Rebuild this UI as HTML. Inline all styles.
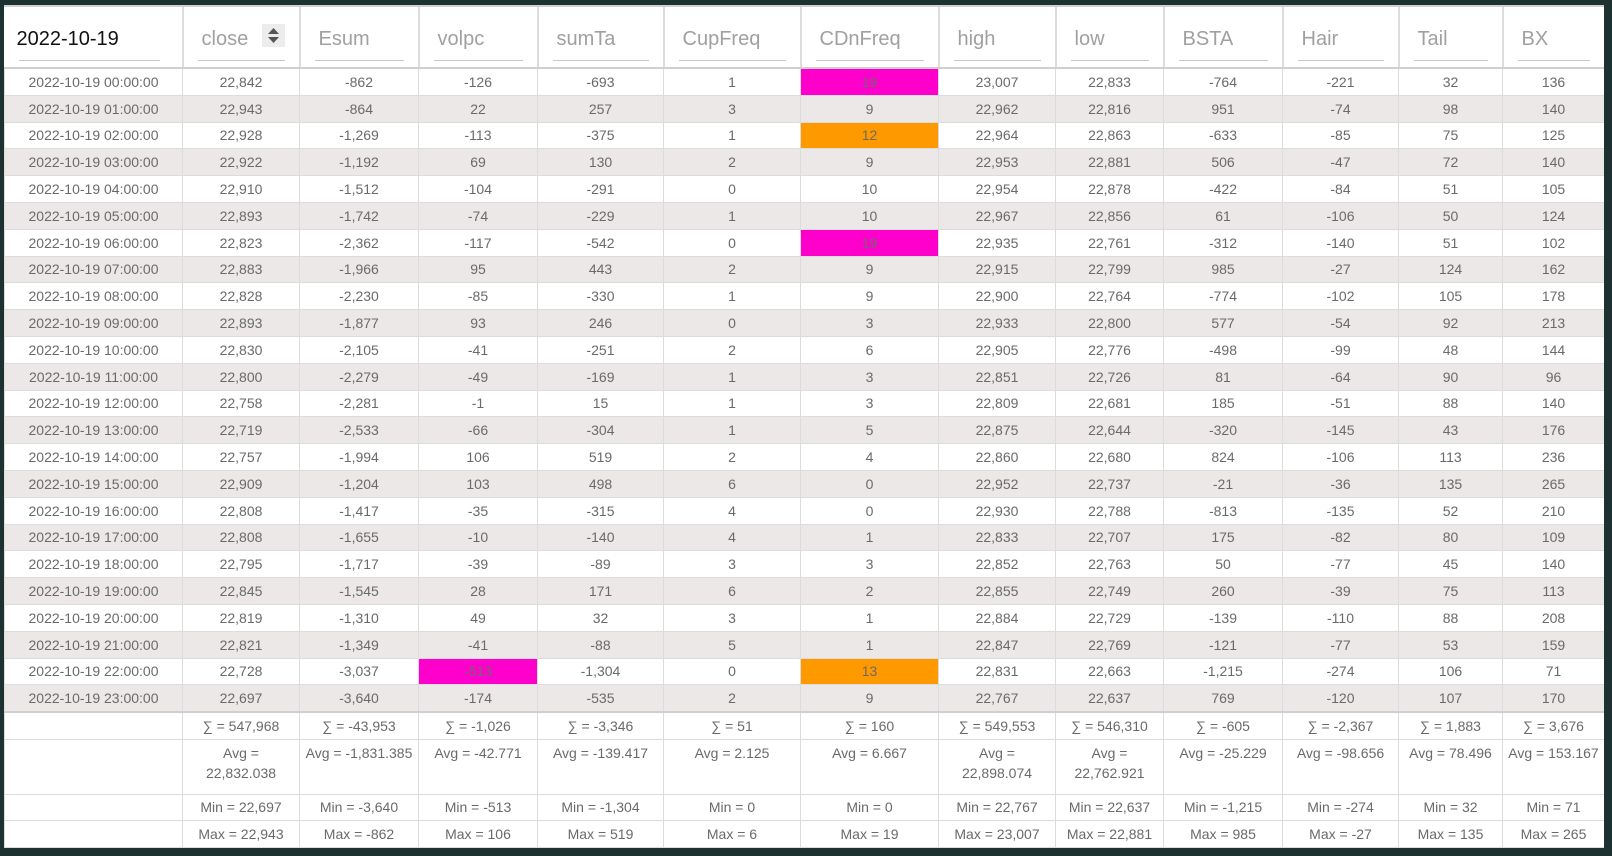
<!DOCTYPE html>
<html><head><meta charset="utf-8"><style>
html,body{margin:0;padding:0;background:#1d3131;width:1612px;height:856px;overflow:hidden}
#w{position:absolute;left:4px;top:5px;width:1600px;height:843px;background:#fff;border-top:2px solid #d0d0d0;box-sizing:border-box;overflow:hidden}
table{border-collapse:collapse;table-layout:fixed;width:1600px;font-family:"Liberation Sans",sans-serif;font-size:14px;color:#6a6a6a}
td,th{border:1px solid #dcdcdc;text-align:center;padding:0;overflow:hidden;white-space:nowrap}
th{height:60px;font-weight:normal;font-size:20px;color:#a0a0a0;text-align:left;position:relative;vertical-align:middle;border-top:none;border-bottom:2px solid #cfcfcf;border-left:2px solid #dcdcdc}
th span{position:absolute;left:18px;top:21px}
th i{position:absolute;left:14px;right:14px;bottom:6px;border-bottom:1px solid #c8c8c8}
th.d span{color:#111;left:12px}
th.d i{left:14px;right:22px}
tbody td{height:25.8px}
tbody tr:nth-child(even) td{background:#ebe8e7}
.m{background:#ff00cc!important}.o{background:#ff9900!important}
tfoot td{height:25.5px;padding:0;line-height:18px;vertical-align:middle}
tfoot tr.a td{height:51px;vertical-align:top;padding-top:3px;line-height:20px}
tfoot tr:first-child td{border-top:2px solid #cfcfcf}
.s{position:absolute;left:78px;top:17px;width:23px;height:23px;background:#ececec}
</style></head><body><div id="w"><table>
<colgroup><col style="width:178px"><col style="width:117px"><col style="width:119px"><col style="width:119px"><col style="width:126px"><col style="width:137px"><col style="width:138px"><col style="width:117px"><col style="width:108px"><col style="width:119px"><col style="width:116px"><col style="width:104px"><col style="width:102px"></colgroup>
<thead><tr><th class="d" style="border-left:none"><span>2022-10-19</span><i></i></th><th><span>close</span><div class="s"><svg width="23" height="23"><path d="M6 10L11.5 4L17 10Z M6 13L11.5 19L17 13Z" fill="#555"/></svg></div><i></i></th><th><span>Esum</span><i></i></th><th><span>volpc</span><i></i></th><th><span>sumTa</span><i></i></th><th><span>CupFreq</span><i></i></th><th><span>CDnFreq</span><i></i></th><th><span>high</span><i></i></th><th><span>low</span><i></i></th><th><span>BSTA</span><i></i></th><th><span>Hair</span><i></i></th><th><span>Tail</span><i></i></th><th><span>BX</span><i></i></th></tr></thead>
<tbody>
<tr><td>2022-10-19 00:00:00</td><td>22,842</td><td>-862</td><td>-126</td><td>-693</td><td>1</td><td class="m">19</td><td>23,007</td><td>22,833</td><td>-764</td><td>-221</td><td>32</td><td>136</td></tr>
<tr><td>2022-10-19 01:00:00</td><td>22,943</td><td>-864</td><td>22</td><td>257</td><td>3</td><td>9</td><td>22,962</td><td>22,816</td><td>951</td><td>-74</td><td>98</td><td>140</td></tr>
<tr><td>2022-10-19 02:00:00</td><td>22,928</td><td>-1,269</td><td>-113</td><td>-375</td><td>1</td><td class="o">12</td><td>22,964</td><td>22,863</td><td>-633</td><td>-85</td><td>75</td><td>125</td></tr>
<tr><td>2022-10-19 03:00:00</td><td>22,922</td><td>-1,192</td><td>69</td><td>130</td><td>2</td><td>9</td><td>22,953</td><td>22,881</td><td>506</td><td>-47</td><td>72</td><td>140</td></tr>
<tr><td>2022-10-19 04:00:00</td><td>22,910</td><td>-1,512</td><td>-104</td><td>-291</td><td>0</td><td>10</td><td>22,954</td><td>22,878</td><td>-422</td><td>-84</td><td>51</td><td>105</td></tr>
<tr><td>2022-10-19 05:00:00</td><td>22,893</td><td>-1,742</td><td>-74</td><td>-229</td><td>1</td><td>10</td><td>22,967</td><td>22,856</td><td>61</td><td>-106</td><td>50</td><td>124</td></tr>
<tr><td>2022-10-19 06:00:00</td><td>22,823</td><td>-2,362</td><td>-117</td><td>-542</td><td>0</td><td class="m">19</td><td>22,935</td><td>22,761</td><td>-312</td><td>-140</td><td>51</td><td>102</td></tr>
<tr><td>2022-10-19 07:00:00</td><td>22,883</td><td>-1,966</td><td>95</td><td>443</td><td>2</td><td>9</td><td>22,915</td><td>22,799</td><td>985</td><td>-27</td><td>124</td><td>162</td></tr>
<tr><td>2022-10-19 08:00:00</td><td>22,828</td><td>-2,230</td><td>-85</td><td>-330</td><td>1</td><td>9</td><td>22,900</td><td>22,764</td><td>-774</td><td>-102</td><td>105</td><td>178</td></tr>
<tr><td>2022-10-19 09:00:00</td><td>22,893</td><td>-1,877</td><td>93</td><td>246</td><td>0</td><td>3</td><td>22,933</td><td>22,800</td><td>577</td><td>-54</td><td>92</td><td>213</td></tr>
<tr><td>2022-10-19 10:00:00</td><td>22,830</td><td>-2,105</td><td>-41</td><td>-251</td><td>2</td><td>6</td><td>22,905</td><td>22,776</td><td>-498</td><td>-99</td><td>48</td><td>144</td></tr>
<tr><td>2022-10-19 11:00:00</td><td>22,800</td><td>-2,279</td><td>-49</td><td>-169</td><td>1</td><td>3</td><td>22,851</td><td>22,726</td><td>81</td><td>-64</td><td>90</td><td>96</td></tr>
<tr><td>2022-10-19 12:00:00</td><td>22,758</td><td>-2,281</td><td>-1</td><td>15</td><td>1</td><td>3</td><td>22,809</td><td>22,681</td><td>185</td><td>-51</td><td>88</td><td>140</td></tr>
<tr><td>2022-10-19 13:00:00</td><td>22,719</td><td>-2,533</td><td>-66</td><td>-304</td><td>1</td><td>5</td><td>22,875</td><td>22,644</td><td>-320</td><td>-145</td><td>43</td><td>176</td></tr>
<tr><td>2022-10-19 14:00:00</td><td>22,757</td><td>-1,994</td><td>106</td><td>519</td><td>2</td><td>4</td><td>22,860</td><td>22,680</td><td>824</td><td>-106</td><td>113</td><td>236</td></tr>
<tr><td>2022-10-19 15:00:00</td><td>22,909</td><td>-1,204</td><td>103</td><td>498</td><td>6</td><td>0</td><td>22,952</td><td>22,737</td><td>-21</td><td>-36</td><td>135</td><td>265</td></tr>
<tr><td>2022-10-19 16:00:00</td><td>22,808</td><td>-1,417</td><td>-35</td><td>-315</td><td>4</td><td>0</td><td>22,930</td><td>22,788</td><td>-813</td><td>-135</td><td>52</td><td>210</td></tr>
<tr><td>2022-10-19 17:00:00</td><td>22,808</td><td>-1,655</td><td>-10</td><td>-140</td><td>4</td><td>1</td><td>22,833</td><td>22,707</td><td>175</td><td>-82</td><td>80</td><td>109</td></tr>
<tr><td>2022-10-19 18:00:00</td><td>22,795</td><td>-1,717</td><td>-39</td><td>-89</td><td>3</td><td>3</td><td>22,852</td><td>22,763</td><td>50</td><td>-77</td><td>45</td><td>140</td></tr>
<tr><td>2022-10-19 19:00:00</td><td>22,845</td><td>-1,545</td><td>28</td><td>171</td><td>6</td><td>2</td><td>22,855</td><td>22,749</td><td>260</td><td>-39</td><td>75</td><td>113</td></tr>
<tr><td>2022-10-19 20:00:00</td><td>22,819</td><td>-1,310</td><td>49</td><td>32</td><td>3</td><td>1</td><td>22,884</td><td>22,729</td><td>-139</td><td>-110</td><td>88</td><td>208</td></tr>
<tr><td>2022-10-19 21:00:00</td><td>22,821</td><td>-1,349</td><td>-41</td><td>-88</td><td>5</td><td>1</td><td>22,847</td><td>22,769</td><td>-121</td><td>-77</td><td>53</td><td>159</td></tr>
<tr><td>2022-10-19 22:00:00</td><td>22,728</td><td>-3,037</td><td class="m">-513</td><td>-1,304</td><td>0</td><td class="o">13</td><td>22,831</td><td>22,663</td><td>-1,215</td><td>-274</td><td>106</td><td>71</td></tr>
<tr><td>2022-10-19 23:00:00</td><td>22,697</td><td>-3,640</td><td>-174</td><td>-535</td><td>2</td><td>9</td><td>22,767</td><td>22,637</td><td>769</td><td>-120</td><td>107</td><td>170</td></tr>
</tbody>
<tfoot>
<tr><td></td><td>∑ = 547,968</td><td>∑ = -43,953</td><td>∑ = -1,026</td><td>∑ = -3,346</td><td>∑ = 51</td><td>∑ = 160</td><td>∑ = 549,553</td><td>∑ = 546,310</td><td>∑ = -605</td><td>∑ = -2,367</td><td>∑ = 1,883</td><td>∑ = 3,676</td></tr>
<tr class="a"><td></td><td style="white-space:normal">Avg =<br>22,832.038</td><td>Avg = -1,831.385</td><td>Avg = -42.771</td><td>Avg = -139.417</td><td>Avg = 2.125</td><td>Avg = 6.667</td><td style="white-space:normal">Avg =<br>22,898.074</td><td style="white-space:normal">Avg =<br>22,762.921</td><td>Avg = -25.229</td><td>Avg = -98.656</td><td>Avg = 78.496</td><td>Avg = 153.167</td></tr>
<tr><td></td><td>Min = 22,697</td><td>Min = -3,640</td><td>Min = -513</td><td>Min = -1,304</td><td>Min = 0</td><td>Min = 0</td><td>Min = 22,767</td><td>Min = 22,637</td><td>Min = -1,215</td><td>Min = -274</td><td>Min = 32</td><td>Min = 71</td></tr>
<tr><td></td><td>Max = 22,943</td><td>Max = -862</td><td>Max = 106</td><td>Max = 519</td><td>Max = 6</td><td>Max = 19</td><td>Max = 23,007</td><td>Max = 22,881</td><td>Max = 985</td><td>Max = -27</td><td>Max = 135</td><td>Max = 265</td></tr>
</tfoot></table></div></body></html>
